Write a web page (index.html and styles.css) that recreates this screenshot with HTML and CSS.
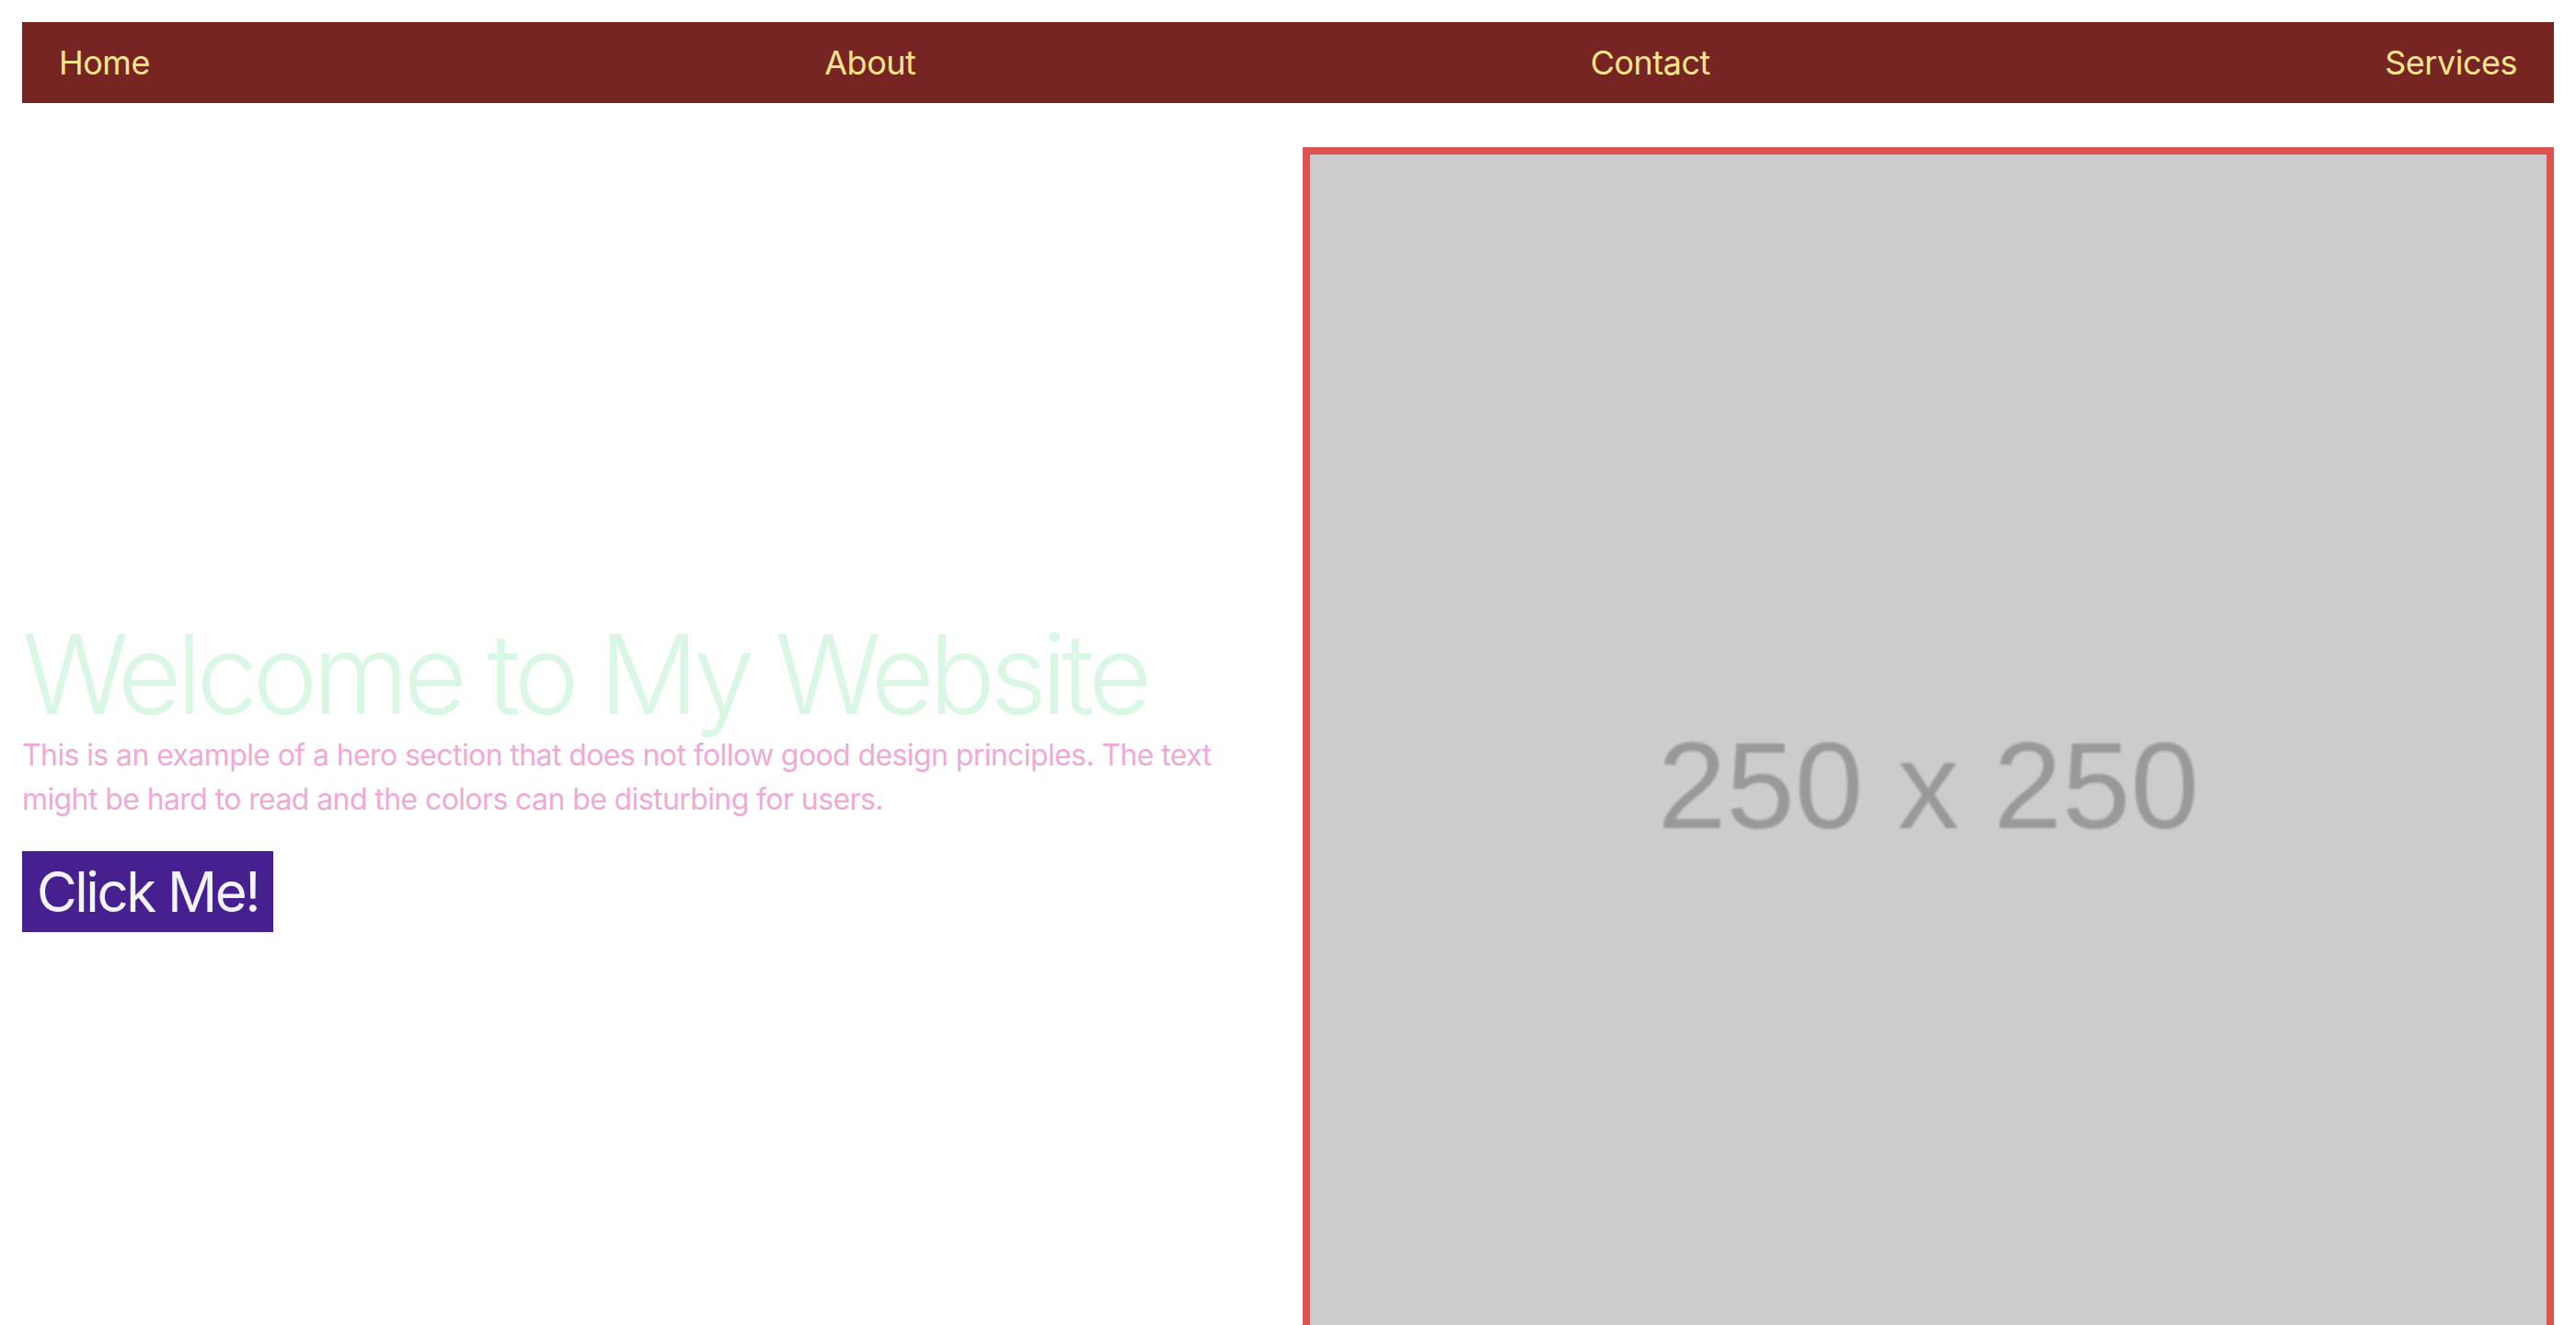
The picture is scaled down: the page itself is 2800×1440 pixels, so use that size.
FILE: index.html
```html
<!DOCTYPE html>
<html>
<head>
<title>My Website</title>
<link rel="stylesheet" href="styles.css">
</head>
<body>

<nav class="topnav">
	<a href="#" class="navlink">Home</a>
	<a href="#" class="navlink">About</a>
	<a href="#" class="navlink">Contact</a>
	<a href="#" class="navlink">Services</a>
</nav>

<section class="hero">
	<div class="hero-text">
		<h1 class="hero-title">Welcome to My Website</h1>
		<p class="hero-sub">This is an example of a hero section that does not follow good design principles. The text might be hard to read and the colors can be disturbing for users.</p>
		<button class="hero-btn">Click Me!</button>
	</div>
	<div class="hero-pic">
		<div class="placeholder"><span>250 x 250</span></div>
	</div>
</section>

</body>
</html>
```

FILE: styles.css
```css
html { background-color: #ffffff; }
body { margin: 24px; font-family: Inter, "Noto Sans", sans-serif; }

.topnav { display: flex; justify-content: space-between; background-color: #762523; padding: 16px 40px; }
.navlink { color: #fbe58c; font-size: 36px; line-height: 56px; letter-spacing: -0.5px; text-decoration: none; }

.hero { display: grid; grid-template-columns: minmax(0, 1fr) minmax(0, 1fr); gap: 32px; align-items: center; margin-top: 48px; }
.hero-text { padding-top: 6px; }
.hero-pic { border: 8px solid #de524f; }

.hero-title { margin: 0; font-size: 120px; line-height: 120px; font-weight: 300; letter-spacing: -6px; color: #d9f7e4; }
.hero-sub { margin: 4px 0 0; font-size: 32px; line-height: 48px; letter-spacing: -0.6px; color: #edaad6; }
.hero-btn { margin-top: 32px; border: 0; padding: 8px 16px; font-family: Inter, sans-serif; font-size: 60px; line-height: 72px; letter-spacing: -2.5px; background-color: #47208f; color: #f1f4ff; }

.placeholder { aspect-ratio: 1 / 1; background-color: #cccccc; display: flex; align-items: center; justify-content: center; }
.placeholder span { font-family: "Liberation Sans", Arial, sans-serif; font-size: 134px; color: #999999; filter: blur(1px); margin-top: 26px; }
```
